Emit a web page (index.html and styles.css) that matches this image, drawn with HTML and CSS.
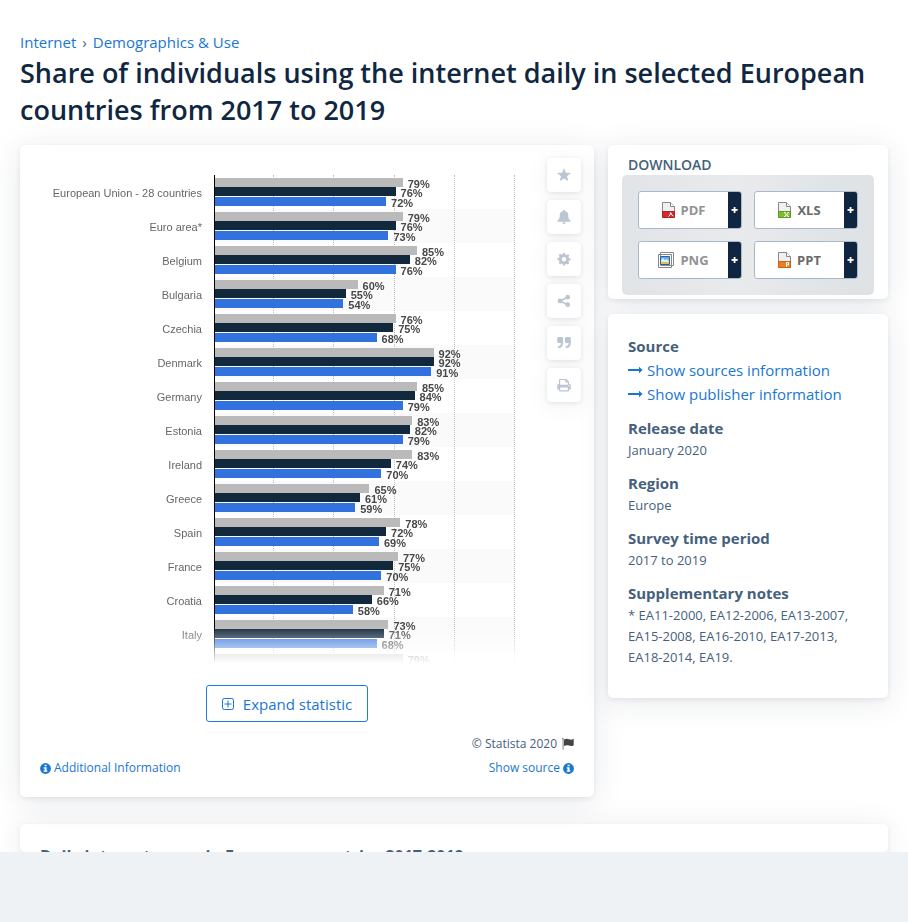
FILE: index.html
```html
<!DOCTYPE html>
<html lang="en">
<head>
<meta charset="utf-8">
<meta name="viewport" content="width=device-width, initial-scale=1">
<title>Daily internet usage in European countries</title>
<link rel="stylesheet" href="styles.css">
</head>
<body>
<main class="page">
  <nav class="crumbs"><a href="#">Internet</a><span class="sep">›</span><a href="#">Demographics &amp; Use</a></nav>
  <h1>Share of individuals using the internet daily in selected European countries from 2017 to 2019</h1>
  <div class="columns">
    <section class="card statistic">
      <div class="top">
        <div class="chart">
          <div class="grid"><i></i><i></i><i></i><i></i><i></i></div>
          <ul class="rows">
            <li><span class="country">European Union - 28 countries</span><div class="bars"><span style="--v:79">79%</span><span style="--v:76">76%</span><span style="--v:72">72%</span></div></li>
            <li><span class="country">Euro area*</span><div class="bars"><span style="--v:79">79%</span><span style="--v:76">76%</span><span style="--v:73">73%</span></div></li>
            <li><span class="country">Belgium</span><div class="bars"><span style="--v:85">85%</span><span style="--v:82">82%</span><span style="--v:76">76%</span></div></li>
            <li><span class="country">Bulgaria</span><div class="bars"><span style="--v:60">60%</span><span style="--v:55">55%</span><span style="--v:54">54%</span></div></li>
            <li><span class="country">Czechia</span><div class="bars"><span style="--v:76">76%</span><span style="--v:75">75%</span><span style="--v:68">68%</span></div></li>
            <li><span class="country">Denmark</span><div class="bars"><span style="--v:92">92%</span><span style="--v:92">92%</span><span style="--v:91">91%</span></div></li>
            <li><span class="country">Germany</span><div class="bars"><span style="--v:85">85%</span><span style="--v:84">84%</span><span style="--v:79">79%</span></div></li>
            <li><span class="country">Estonia</span><div class="bars"><span style="--v:83">83%</span><span style="--v:82">82%</span><span style="--v:79">79%</span></div></li>
            <li><span class="country">Ireland</span><div class="bars"><span style="--v:83">83%</span><span style="--v:74">74%</span><span style="--v:70">70%</span></div></li>
            <li><span class="country">Greece</span><div class="bars"><span style="--v:65">65%</span><span style="--v:61">61%</span><span style="--v:59">59%</span></div></li>
            <li><span class="country">Spain</span><div class="bars"><span style="--v:78">78%</span><span style="--v:72">72%</span><span style="--v:69">69%</span></div></li>
            <li><span class="country">France</span><div class="bars"><span style="--v:77">77%</span><span style="--v:75">75%</span><span style="--v:70">70%</span></div></li>
            <li><span class="country">Croatia</span><div class="bars"><span style="--v:71">71%</span><span style="--v:66">66%</span><span style="--v:58">58%</span></div></li>
            <li><span class="country">Italy</span><div class="bars"><span style="--v:73">73%</span><span style="--v:71">71%</span><span style="--v:68">68%</span></div></li>
            <li><span class="country"></span><div class="bars"><span style="--v:79">79%</span></div></li>
          </ul>
        </div>
        <div class="tools">
          <button type="button" aria-label="Favorite"><svg viewBox="0 0 14 14"><path d="M7 0l1.900 4.700 5.100.3-4 3.200 1.400 5L7 10.500l-4.400 2.700 1.400-5L0 5l5.100-.3z"/></svg></button>
          <button type="button" aria-label="Notify"><svg viewBox="0 0 14 14"><path d="M7 0c.7 0 1.200.5 1.200 1.200C10.300 1.700 11.300 3.500 11.300 5.500c0 3 .7 4.200 2.400 5.300v.9H.3v-.9C2 9.700 2.700 8.500 2.700 5.500c0-2 1-3.800 3.100-4.300C5.800.5 6.300 0 7 0zM5.300 12.300h3.400a1.700 1.700 0 0 1-3.400 0z"/></svg></button>
          <button type="button" aria-label="Settings"><svg viewBox="0 0 14 14"><path fill-rule="evenodd" d="M6 1h2l.4 1.700 1 .4 1.500-.9 1.400 1.400-.9 1.500.4 1 1.700.3v1.900l-1.700.4-.4 1 .9 1.500-1.400 1.400-1.500-.9-1 .4L8 13.500H6l-.4-1.700-1-.4-1.500.9-1.400-1.400.9-1.500-.4-1L.5 8V6.100l1.700-.4.4-1-.9-1.500 1.400-1.400 1.500.9 1-.4zM7 5a2.200 2.200 0 1 0 0 4.400A2.200 2.200 0 0 0 7 5z"/></svg></button>
          <button type="button" aria-label="Share"><svg viewBox="0 0 14 14"><path d="M10.600 3.300L3 7l7.600 3.700" fill="none" stroke="currentColor" stroke-width="1.600"/><circle cx="3" cy="7" r="2.400"/><circle cx="10.700" cy="3.200" r="2.400"/><circle cx="10.700" cy="10.700" r="2.400"/></svg></button>
          <button type="button" aria-label="Cite"><svg viewBox="0 0 14 14"><path d="M1.300 1h3.400c.8 0 1.400.6 1.400 1.400V7c0 3-1.700 5-4.500 5H1v-2h.6C3 10 3.900 9 3.900 7.500V7H1.600C.7 7 .2 6.400.2 5.600V2.400C.2 1.600.7 1 1.300 1zM9 1h3.400c.8 0 1.400.6 1.400 1.400V7c0 3-1.700 5-4.500 5h-.6v-2h.6c1.400 0 2.300-1 2.300-2.500V7H9.300c-.8 0-1.400-.6-1.400-1.400V2.400C7.900 1.600 8.400 1 9 1z"/></svg></button>
          <button type="button" aria-label="Print"><svg viewBox="0 0 14 14"><path fill-rule="evenodd" d="M2 6V1.700c0-.5.3-.8.8-.8h6.400L12 3.600V6c1 0 1.800.7 1.800 1.600v3.600c0 .2-.1.400-.4.400H12v1c0 .5-.3.800-.8.800H2.800c-.5 0-.8-.3-.8-.8v-1H.6c-.3 0-.4-.2-.4-.4V7.600C.2 6.700 1 6 2 6zM3.200 6.800h7.600V4.500H9c-.5 0-.8-.3-.8-.8V2h-5zM3.200 9.500v2.700h7.600V9.500zM12 7.100a.6.600 0 1 0 0 1.200.6.600 0 0 0 0-1.200z"/></svg></button>
        </div>
      </div>
      <div class="action"><button class="expand" type="button"><svg viewBox="0 0 12 12"><rect x=".5" y=".5" width="11" height="11" rx="1.800"/><path d="M6 2.500v7M2.500 6h7"/></svg>Expand statistic</button></div>
      <div class="foot">
        <p class="copy">© Statista 2020 <svg viewBox="0 0 12 12"><path d="M.2.800a.7.700 0 1 1 1.200.5V11.500H.7V1.300zM2 1.600c2-1.200 3.500-1 5-.3 1.500.6 3 .5 4.700-.5v6.400c-1.700 1-3.200 1.100-4.700.4-1.500-.6-3-.700-5 .5z"/></svg></p>
        <a href="#"><svg class="info" viewBox="0 0 12 12"><circle cx="6" cy="6" r="5.900"/><path d="M5 1.800h2.200v1.700H5zM4 4.500h3.200v3.600H8v1.500H4V8.100h1V6H4z"/></svg>Additional Information</a>
        <a href="#">Show source<svg class="info" viewBox="0 0 12 12"><circle cx="6" cy="6" r="5.900"/><path d="M5 1.800h2.200v1.700H5zM4 4.500h3.200v3.600H8v1.500H4V8.100h1V6H4z"/></svg></a>
      </div>
    </section>
    <aside class="side">
      <section class="card download">
        <h2>DOWNLOAD</h2>
        <div class="formats">
          <button type="button" class="dim"><span><svg class="doc" viewBox="0 0 13 16"><path class="sheet" d="M.5.5h8l4 4v11H.5z"/><path class="fold" d="M8.500.5v4h4"/><path fill="#d32a2e" stroke="#a92327" d="M.5 9.500h12v6H.5z"/><path d="M6.500 14.500q2-1 2.200-4 .6 3 2.800 3.500" fill="none" stroke="#fff"/></svg>PDF</span><b>+</b></button>
          <button type="button"><span><svg class="doc" viewBox="0 0 13 16"><path class="sheet" d="M.5.5h8l4 4v11H.5z"/><path class="fold" d="M8.500.5v4h4"/><path fill="#7dbd31" stroke="#5f9a1e" d="M.5 9.500h12v6H.5z"/><path d="M6.500 11l4 3.500M10.500 11l-4 3.500M6 10.500h1.500M9.500 10.500H11M6 14.500h1.500M9.500 14.500H11" fill="none" stroke="#fff"/></svg>XLS</span><b>+</b></button>
          <button type="button" class="dim"><span><svg class="pic" viewBox="0 0 16 16"><path fill="#fff" stroke="#888" d="M2.500.5h13v13h-13zM.5 2.500h13v13H.5z"/><path fill="#64aee9" stroke="#315f9b" d="M2.500 4.500h9v8h-9z"/><path fill="#d8edfb" d="M3 8l2-2 2 2 2-1 2 2v1H3z"/><path fill="#e5bd50" d="M3 10h8v2H3z"/></svg>PNG</span><b>+</b></button>
          <button type="button"><span><svg class="doc" viewBox="0 0 13 16"><path class="sheet" d="M.5.5h8l4 4v11H.5z"/><path class="fold" d="M8.500.5v4h4"/><path fill="#ed7d23" stroke="#cb6313" d="M.5 9.500h12v6H.5z"/><path d="M8.500 15v-4.500h2v2.500h-2" fill="none" stroke="#fff"/></svg>PPT</span><b>+</b></button>
        </div>
      </section>
      <section class="card details">
        <h3>Source</h3>
        <p class="links"><a href="#"><svg viewBox="0 0 16 8"><path d="M0 3h11V.8L14.600 4 11 7.200V5H0z"/></svg>Show sources information</a><a href="#"><svg viewBox="0 0 16 8"><path d="M0 3h11V.8L14.600 4 11 7.200V5H0z"/></svg>Show publisher information</a></p>
        <h3>Release date</h3>
        <p>January 2020</p>
        <h3>Region</h3>
        <p>Europe</p>
        <h3>Survey time period</h3>
        <p>2017 to 2019</p>
        <h3>Supplementary notes</h3>
        <p>* EA11-2000, EA12-2006, EA13-2007, EA15-2008, EA16-2010, EA17-2013, EA18-2014, EA19.</p>
      </section>
    </aside>
  </div>
  <section class="card teaser"><h2>Daily internet usage in European countries 2017-2019</h2></section>
</main>
</body>
</html>
```
FILE: styles.css
```css
* { box-sizing: border-box; }
body { margin: 0; background: #eef2f5; color: #455f7c; font: 15px/24px "Open Sans", sans-serif; }
h1, h2, h3, p, ul { margin: 0; padding: 0; }
a { color: #1a76d3; text-decoration: none; }
svg { display: block; flex: none; fill: currentColor; }
button { font: inherit; cursor: pointer; padding: 0; }

.page { background: #fff; padding: 30px 20px 0; overflow: hidden; }
.crumbs { display: flex; gap: 6px; }
.sep { color: #455f7c; }
h1 { color: #0f2741; font-size: 27px; line-height: 37px; font-weight: 600; }
.columns { display: grid; grid-template-columns: minmax(0, 1fr) 280px; gap: 14px; align-items: start; margin-top: 17px; }
.card { background: #fff; border-radius: 5px; box-shadow: 0 2px 5px rgba(15, 39, 65, .08), 0 4px 32px rgba(15, 39, 65, .1); }

.statistic { padding: 13px 13px 17px 20px; }
.top { display: flex; gap: 32px; align-items: flex-start; }
.chart { flex: 1; display: grid; grid-template-columns: 162px minmax(0, 1fr); column-gap: 12px; margin-top: 17px; height: 490px; overflow: hidden; font: 11px/11px "Liberation Sans", sans-serif; -webkit-mask-image: linear-gradient(#000 451px, transparent 489px); mask-image: linear-gradient(#000 451px, transparent 489px); }
.grid { grid-area: 1 / 2; display: flex; z-index: 1; }
.grid i { flex: 1; border-right: 1px dotted #c0c0c0; }
.rows { grid-area: 1 / 1 / 2 / 3; list-style: none; z-index: 2; }
.rows li { display: grid; grid-template-columns: 162px minmax(0, 1fr); column-gap: 12px; height: 34px; }
.country { align-self: center; text-align: right; color: #666; padding-top: 2px; }
.bars { display: grid; grid-template-rows: 9px 10px 9px; padding: 3px 3px 3px 0; border-left: 1px solid #000; }
.rows li:nth-child(even) .bars { background: rgba(0, 0, 0, .02); }
.bars span { display: flex; gap: 5px; height: 9px; color: #484848; font-weight: bold; line-height: 12px; --c: #bababa; }
.bars span::before { content: ""; flex: none; width: calc(var(--v) / 125 * 100%); background: var(--c); }
.bars span:nth-child(2) { --c: #12283d; }
.bars span:nth-child(3) { --c: #3272de; padding-top: 0; }
.bars span:nth-child(3) { align-self: end; }

.tools { display: grid; gap: 8px; }
.tools button { display: grid; place-items: center; width: 34px; height: 34px; border: 0; border-radius: 4px; background: #fff; color: #bcc5d2; box-shadow: 0 1px 4px rgba(15, 39, 65, .1), 0 4px 24px rgba(15, 39, 65, .06); }
.tools svg { width: 14px; height: 14px; }

.action { display: flex; justify-content: center; padding: 20px 47px 0 0; }
.expand { display: flex; align-items: center; gap: 9px; height: 37px; padding: 0 15px; border: 1px solid #1f7be0; border-radius: 3px; background: #fff; color: #1a76d3; line-height: 34px; }
.expand svg { width: 12px; height: 12px; fill: none; stroke: currentColor; }
.foot { display: grid; grid-template-columns: 1fr auto; margin: 10px 7px 0 0; font-size: 12px; }
.copy { grid-column: 1 / 3; display: flex; justify-content: flex-end; align-items: center; gap: 5px; }
.copy svg { width: 12px; height: 12px; color: #444; }
.foot a { display: flex; align-items: center; gap: 3px; }
.info { width: 11px; height: 11px; }
.info path { fill: #fff; }

.side { display: grid; gap: 15px; }
.download { padding: 10px 14px 4px; }
.download h2 { font-size: 14px; line-height: 20px; font-weight: 600; padding-left: 6px; }
.formats { display: grid; grid-template-columns: 1fr 1fr; gap: 12px; padding: 16px; border-radius: 5px; background: linear-gradient(90deg, #e1e4e7, #e9eaec 45%, #dfe3e6 90%); }
.formats button { display: flex; height: 38px; overflow: hidden; border: 1px solid #a9b9cc; border-radius: 3px; background: #fff; color: #6a6a6a; font-size: 13px; font-weight: 700; line-height: 36px; }
.formats .dim { color: #929292; }
.formats span { flex: 1; display: flex; align-items: center; justify-content: center; gap: 6px; }
.formats b { width: 13px; background: #10253f; color: #fff; font-size: 12px; line-height: 35px; }
.doc { width: 13px; height: 16px; }
.pic { width: 16px; height: 16px; }
.sheet { fill: #eef0f1; stroke: #888; }
.fold { fill: #fff; stroke: #888; }

.details { padding: 20px; }
.details h3 { font-size: 15px; line-height: 24px; font-weight: 700; }
.details p { font-size: 13px; line-height: 21px; margin-bottom: 10px; }
.details .links { font-size: 15px; line-height: 24px; }
.links a { display: flex; align-items: center; gap: 3px; }
.links svg { width: 16px; height: 8px; }

.teaser { height: 28px; margin-top: 27px; padding: 20px 20px 0; overflow: hidden; }
.teaser h2 { font-size: 16px; line-height: 24px; font-weight: 700; }
```
